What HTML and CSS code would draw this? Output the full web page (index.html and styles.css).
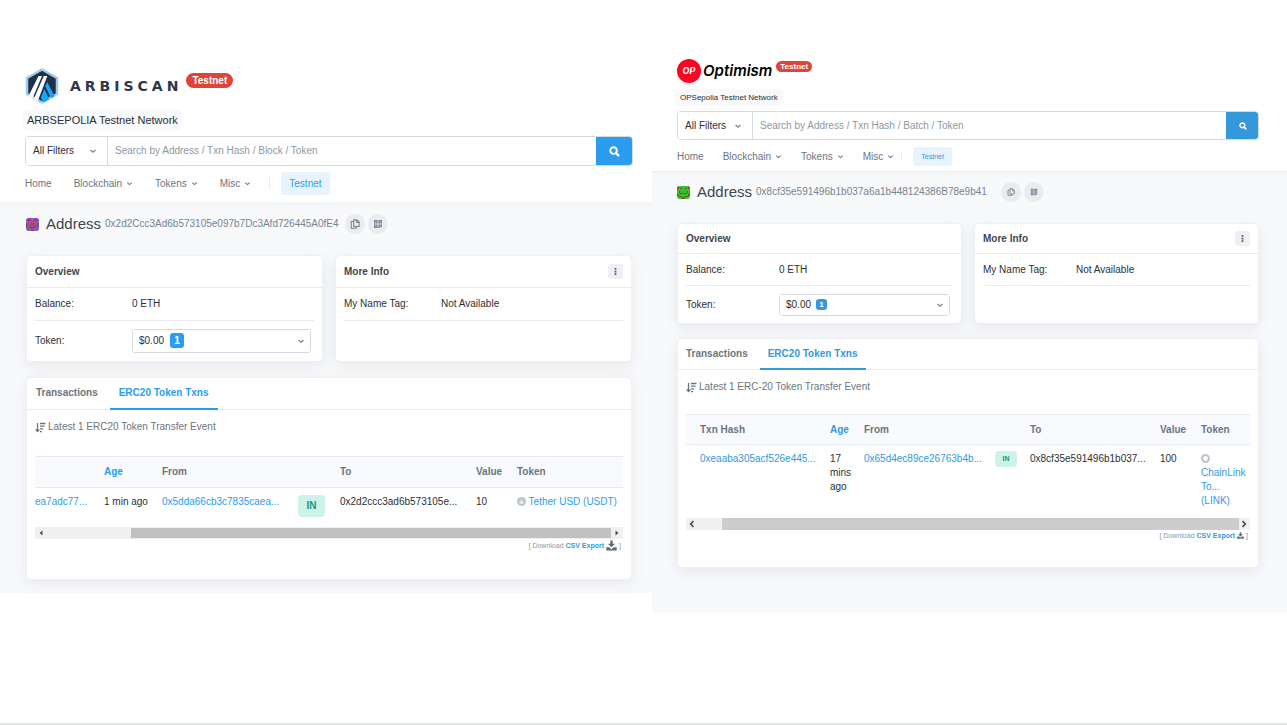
FILE: index.html
```html
<!DOCTYPE html>
<html lang="en">
<head>
    <meta charset="UTF-8">
    <meta name="viewport" content="width=device-width, initial-scale=1.0">
    <title>Testnet Explorers</title>
    <link rel="stylesheet" href="styles.css">
</head>
<body>
    <!-- shared icons -->
    <svg class="sprite" aria-hidden="true">
        <symbol id="chevron" viewBox="0 0 8 8"><path d="M1.500 3 4 5.300 6.500 3" fill="none" stroke="currentColor" stroke-width="1.200"/></symbol>
        <symbol id="search" viewBox="0 0 12 12"><circle cx="5" cy="5" r="3.600" fill="none" stroke="currentColor" stroke-width="2.100"/><path d="m7.600 7.600 3.400 3.400" stroke="currentColor" stroke-width="2.500"/></symbol>
        <symbol id="copy" viewBox="0 0 12 12"><path d="M4.500 1h3.700L11 3.600V9H4.500zM8 1v3h3M4.500 3H1.500v8h6V9" fill="none" stroke="currentColor" stroke-width="1.300" stroke-linejoin="round"/></symbol>
        <symbol id="qr" viewBox="0 0 10 10"><path fill="currentColor" fill-rule="evenodd" d="M1 1h3.600v3.600H1zM2.300 2.300v1h1v-1zM5.400 1H9v3.600H5.400zM6.700 2.300v1h1v-1zM1 5.400h3.600V9H1zM2.300 6.700v1h1v-1zM5.400 5.400H9V8H7.500v1H5.400zM6.700 6.700v1h1v-1z"/></symbol>
        <symbol id="dots" viewBox="0 0 8 10"><path fill="currentColor" d="M3 1h2v2H3zM3 4h2v2H3zM3 7h2v2H3z"/></symbol>
        <symbol id="sort" viewBox="0 0 11 11"><path d="M2.500 1v8M.6 7.300l1.900 2.200 1.900-2.200M5 1.500h5.500M5 4.200h4.500M5 6.900h3.200M5 9.600h2" fill="none" stroke="currentColor" stroke-width="1.300"/></symbol>
        <symbol id="download" viewBox="0 0 12 12"><path fill="currentColor" d="M4.700.5h2.600V4H10L6 8 2 4h2.700zM.3 7.800h3.200L6 10l2.500-2.200h3.200v3.700H.3z"/></symbol>
        <symbol id="arrow-left" viewBox="0 0 8 8"><path fill="currentColor" d="M5.500 1.500v5L2.500 4z"/></symbol>
        <symbol id="arrow-right" viewBox="0 0 8 8"><path fill="currentColor" d="M2.500 1.500v5L5.500 4z"/></symbol>
        <symbol id="angle-left" viewBox="0 0 8 8"><path d="M5.500 1.200 2.700 4l2.800 2.800" fill="none" stroke="currentColor" stroke-width="1.700"/></symbol>
        <symbol id="angle-right" viewBox="0 0 8 8"><path d="M2.500 1.200 5.300 4 2.500 6.800" fill="none" stroke="currentColor" stroke-width="1.700"/></symbol>
    </svg>

    <main class="panels">
        <section class="panel arb">
            <header class="header">
                <div class="brand">
                    <svg class="brand-icon" viewBox="0 0 34 36">
                        <path d="M17 1.500 32 10v16L17 34.500 2 26V10z" fill="#213147" stroke="#9dcced" stroke-width="2.500" stroke-linejoin="round"/>
                        <path d="M13.500 8h3.500L7.500 30.500 3.500 28z" fill="#fff"/>
                        <path d="M18.800 8h3.500L12.800 33l-4-2z" fill="#fff"/>
                        <path d="m20.300 18.500 1.900-4.500 7.300 14.300-3.300 2z" fill="#12aaff"/>
                        <path d="m19.400 21 4.800 10.500-5.800 3-2.600-4.700z" fill="#12aaff"/>
                    </svg>
                    <span class="brand-name">ARBISCAN</span>
                    <span class="brand-badge">Testnet</span>
                </div>
                <span class="network">ARBSEPOLIA Testnet Network</span>
                <form class="search">
                    <span class="select filter">
                        <select aria-label="Filter"><option>All Filters</option></select>
                        <svg class="chevron"><use href="#chevron"/></svg>
                    </span>
                    <input type="text" aria-label="Search" placeholder="Search by Address / Txn Hash / Block / Token">
                    <button type="button" aria-label="Search"><svg><use href="#search"/></svg></button>
                </form>
                <nav class="nav">
                    <a href="#">Home</a>
                    <a href="#">Blockchain <svg><use href="#chevron"/></svg></a>
                    <a href="#">Tokens <svg><use href="#chevron"/></svg></a>
                    <a href="#">Misc <svg><use href="#chevron"/></svg></a>
                    <a href="#" class="net">Testnet</a>
                </nav>
            </header>

            <div class="content">
                <div class="address">
                    <svg class="avatar" viewBox="0 0 8 8" shape-rendering="crispEdges">
                        <path fill="#a62fc0" d="M0 0h8v8H0z"/>
                        <path fill="#b0603a" d="M2 2h4v1H2zM1 3h2v1H1zM5 3h2v1H5zM3 4h2v1H3zM2 6h1v1H2zM5 6h1v1H5z"/>
                        <path fill="#38a08c" d="M0 2h1v1H0zM7 2h1v1H7zM1 5h1v1H1zM6 5h1v1H6zM0 6h1v1H0zM7 6h1v1H7zM2 7h1v1H2zM5 7h1v1H5zM3 0h2v1H3z"/>
                    </svg>
                    <h1>Address</h1>
                    <span class="hash">0x2d2Ccc3Ad6b573105e097b7Dc3Afd726445A0fE4</span>
                    <button class="round" aria-label="Copy address"><svg><use href="#copy"/></svg></button>
                    <button class="round" aria-label="QR code"><svg><use href="#qr"/></svg></button>
                </div>

                <div class="cards">
                    <div class="card">
                        <h2>Overview</h2>
                        <div class="row"><span>Balance:</span><span>0 ETH</span></div>
                        <div class="row">
                            <label for="arb-token">Token:</label>
                            <span class="select token">
                                <select id="arb-token"><option>$0.00</option></select>
                                <b class="count">1</b>
                                <svg class="chevron"><use href="#chevron"/></svg>
                            </span>
                        </div>
                    </div>
                    <div class="card">
                        <h2>More Info <button class="more" aria-label="More"><svg><use href="#dots"/></svg></button></h2>
                        <div class="row"><span>My Name Tag:</span><span>Not Available</span></div>
                    </div>
                </div>

                <div class="card txns">
                    <div class="tabs">
                        <a href="#">Transactions</a>
                        <a href="#" class="active">ERC20 Token Txns</a>
                    </div>
                    <div class="tab-body">
                        <p class="latest"><svg><use href="#sort"/></svg> Latest 1 ERC20 Token Transfer Event</p>
                        <table>
                            <thead>
                                <tr><th class="c-hash"></th><th class="c-age"><a href="#">Age</a></th><th class="c-from">From</th><th class="c-dir"></th><th class="c-to">To</th><th class="c-value">Value</th><th>Token</th></tr>
                            </thead>
                            <tbody>
                                <tr>
                                    <td><a href="#">ea7adc77...</a></td>
                                    <td>1 min ago</td>
                                    <td><a href="#">0x5dda66cb3c7835caea...</a></td>
                                    <td><span class="in">IN</span></td>
                                    <td>0x2d2ccc3ad6b573105e...</td>
                                    <td>10</td>
                                    <td><svg class="coin" viewBox="0 0 10 10"><circle cx="5" cy="5" r="5" fill="#bcc4d0"/><path d="M5 2.200 8 6.500 6.500 7.700h-3L2 6.500z" fill="#e3e7ee"/></svg> <a href="#">Tether USD (USDT)</a></td>
                                </tr>
                            </tbody>
                        </table>
                        <div class="scrollbar">
                            <svg><use href="#arrow-left"/></svg>
                            <span class="thumb"></span>
                            <svg><use href="#arrow-right"/></svg>
                        </div>
                        <p class="export">[ Download <a href="#">CSV Export</a> <svg><use href="#download"/></svg> ]</p>
                    </div>
                </div>
            </div>
        </section>

        <section class="panel op">
            <header class="header">
                <div class="brand">
                    <span class="brand-icon">OP</span>
                    <span class="brand-name">Optimism</span>
                    <span class="brand-badge">Testnet</span>
                </div>
                <span class="network">OPSepolia Testnet Network</span>
                <form class="search">
                    <span class="select filter">
                        <select aria-label="Filter"><option>All Filters</option></select>
                        <svg class="chevron"><use href="#chevron"/></svg>
                    </span>
                    <input type="text" aria-label="Search" placeholder="Search by Address / Txn Hash / Batch / Token">
                    <button type="button" aria-label="Search"><svg><use href="#search"/></svg></button>
                </form>
                <nav class="nav">
                    <a href="#">Home</a>
                    <a href="#">Blockchain <svg><use href="#chevron"/></svg></a>
                    <a href="#">Tokens <svg><use href="#chevron"/></svg></a>
                    <a href="#">Misc <svg><use href="#chevron"/></svg></a>
                    <a href="#" class="net">Testnet</a>
                </nav>
            </header>

            <div class="content">
                <div class="address">
                    <svg class="avatar" viewBox="0 0 8 8" shape-rendering="crispEdges">
                        <path fill="#2fc42f" d="M0 0h8v8H0z"/>
                        <path fill="#8d4a2b" d="M0 0h1v2H0zM7 0h1v2H7zM2 1h1v1H2zM5 1h1v1H5zM1 3h1v1H1zM6 3h1v1H6zM2 4h4v1H2zM0 5h1v1H0zM7 5h1v1H7zM1 6h2v1H1zM5 6h2v1H5zM3 7h2v1H3z"/>
                    </svg>
                    <h1>Address</h1>
                    <span class="hash">0x8cf35e591496b1b037a6a1b448124386B78e9b41</span>
                    <button class="round" aria-label="Copy address"><svg><use href="#copy"/></svg></button>
                    <button class="round" aria-label="QR code"><svg><use href="#qr"/></svg></button>
                </div>

                <div class="cards">
                    <div class="card">
                        <h2>Overview</h2>
                        <div class="row"><span>Balance:</span><span>0 ETH</span></div>
                        <div class="row">
                            <label for="op-token">Token:</label>
                            <span class="select token">
                                <select id="op-token"><option>$0.00</option></select>
                                <b class="count">1</b>
                                <svg class="chevron"><use href="#chevron"/></svg>
                            </span>
                        </div>
                    </div>
                    <div class="card">
                        <h2>More Info <button class="more" aria-label="More"><svg><use href="#dots"/></svg></button></h2>
                        <div class="row"><span>My Name Tag:</span><span>Not Available</span></div>
                    </div>
                </div>

                <div class="card txns">
                    <div class="tabs">
                        <a href="#">Transactions</a>
                        <a href="#" class="active">ERC20 Token Txns</a>
                    </div>
                    <div class="tab-body">
                        <p class="latest"><svg><use href="#sort"/></svg> Latest 1 ERC-20 Token Transfer Event</p>
                        <table>
                            <thead>
                                <tr><th class="c-hash">Txn Hash</th><th class="c-age"><a href="#">Age</a></th><th class="c-from">From</th><th class="c-dir"></th><th class="c-to">To</th><th class="c-value">Value</th><th>Token</th></tr>
                            </thead>
                            <tbody>
                                <tr>
                                    <td><a href="#">0xeaaba305acf526e445...</a></td>
                                    <td>17<br>mins<br>ago</td>
                                    <td><a href="#">0x65d4ec89ce26763b4b...</a></td>
                                    <td><span class="in">IN</span></td>
                                    <td>0x8cf35e591496b1b037...</td>
                                    <td>100</td>
                                    <td><svg class="coin" viewBox="0 0 10 10"><circle cx="5" cy="5" r="5" fill="#bcc4d0"/><path d="m5 2 2.500 1.500v3L5 8 2.500 6.500v-3z" fill="#fff"/></svg><br><a href="#">ChainLink<br>To...<br>(LINK)</a></td>
                                </tr>
                            </tbody>
                        </table>
                        <div class="scrollbar">
                            <svg><use href="#angle-left"/></svg>
                            <span class="thumb"></span>
                            <svg><use href="#angle-right"/></svg>
                        </div>
                        <p class="export">[ Download <a href="#">CSV Export</a> <svg><use href="#download"/></svg> ]</p>
                    </div>
                </div>
            </div>
        </section>
    </main>
</body>
</html>
```

FILE: styles.css
```css
* {
    box-sizing: border-box;
}

body {
    margin: 0;
    min-height: 100vh;
    border-bottom: 2px solid #dfe2e7;
    background-color: #fff;
    color: #2b2f36;
    font-family: "Liberation Sans", Arial, sans-serif;
    font-size: 10px;
    line-height: 14px;
}

h1, h2, p {
    margin: 0;
}

a {
    color: var(--blue);
    text-decoration: none;
}

button, input, select {
    font: inherit;
    color: inherit;
    border: none;
    padding: 0;
}

svg {
    flex: none;
}

.sprite {
    display: none;
}

.panels {
    display: grid;
    grid-template-columns: 652fr 635fr;
    align-items: start;
}

.arb {
    --blue: #2a9df0;
    padding-top: 68px;
}

.op {
    --blue: #3498db;
    padding-top: 58px;
}

/* header */
.header {
    display: flex;
    flex-direction: column;
    align-items: flex-start;
    padding: 0 19px 7px 25px;
}

.op .header {
    padding: 0 28px 5px 25px;
    border-bottom: 1px solid #e7eaf3;
}

.brand {
    display: flex;
    align-items: center;
    height: 36px;
    margin-bottom: 6px;
}

.op .brand {
    height: 26px;
    margin-bottom: 5px;
}

.arb .brand-icon {
    width: 34px;
    height: 36px;
    margin-right: 11px;
}

.op .brand-icon {
    width: 24px;
    height: 24px;
    margin-right: 2px;
    border-radius: 50%;
    background-color: #ff0420;
    color: #fff;
    font: italic bold 9px/24px Inter, sans-serif;
    text-align: center;
}

.arb .brand-name {
    font: bold 14px/16px "DejaVu Sans", sans-serif;
    letter-spacing: 4px;
    color: #2d3748;
}

.op .brand-name {
    font: italic 600 15px/20px Inter, sans-serif;
    color: #000;
}

.brand-badge {
    align-self: flex-start;
    margin: 5px 0 0 4px;
    padding: 0 6px;
    border-radius: 8px;
    background-color: #de4437;
    color: #fff;
    font-weight: bold;
    line-height: 15px;
}

.op .brand-badge {
    margin-top: 3px;
    padding: 0 4px;
    font-size: 8px;
    line-height: 11px;
}

.network {
    margin-left: -2px;
    margin-bottom: 6px;
    padding: 0 4px;
    border-radius: 4px;
    background-color: #f8f9fa;
    font-size: 11px;
    line-height: 20px;
}

.op .network {
    margin-bottom: 5px;
    padding: 0 5px;
    font-size: 8px;
    line-height: 17px;
}

.search {
    display: flex;
    width: 100%;
    height: 30px;
    border: 1px solid #d5dae2;
    border-radius: 4px;
    overflow: hidden;
}

.op .search {
    height: 29px;
}

.select {
    position: relative;
    display: flex;
}

.select select {
    appearance: none;
    width: 100%;
    padding: 0 7px;
    background-color: #fff;
}

.select .chevron {
    position: absolute;
    right: 10px;
    top: 50%;
    width: 8px;
    height: 8px;
    margin-top: -4px;
    color: #77838f;
    pointer-events: none;
}

.filter {
    width: 82px;
    border-right: 1px solid #d5dae2;
}

.op .filter {
    width: 75px;
}

.search input {
    flex: 1;
    min-width: 0;
    padding: 0 7px;
}

.search input::placeholder {
    color: #8c98a4;
}

.search button {
    display: flex;
    align-items: center;
    justify-content: center;
    width: 37px;
    margin: -1px -1px -1px 0;
    background-color: var(--blue);
    color: #fff;
}

.search button svg {
    width: 11px;
    height: 11px;
}

.op .search button {
    width: 33px;
}

.op .search button svg {
    width: 8px;
    height: 8px;
}

.nav {
    display: flex;
    align-items: center;
    gap: 22px;
    height: 23px;
    margin-top: 6px;
}

.op .nav {
    gap: 19px;
    height: 19px;
    margin-top: 7px;
}

.nav a {
    display: flex;
    align-items: center;
    gap: 4px;
    color: #6c757e;
}

.nav a svg {
    width: 7px;
    height: 7px;
}

.nav .net {
    padding: 0 8px;
    border-radius: 3px;
    background-color: #e8f4fd;
    color: var(--blue);
    line-height: 23px;
    margin-left: 8px;
    position: relative;
}

.nav .net::before {
    content: "";
    position: absolute;
    left: -12px;
    top: 5px;
    bottom: 5px;
    border-left: 1px solid #e7eaf3;
}

.op .nav .net {
    margin-left: 0;
    font-size: 7px;
    line-height: 19px;
}

/* page body */
.content {
    padding: 11px 20px 13px 26px;
    background: linear-gradient(#f3f5f7, #f8f9fb 8px);
}

.op .content {
    padding: 9px 28px 45px 25px;
}

.address {
    display: flex;
    align-items: center;
    height: 22px;
    margin-bottom: 20px;
}

.avatar {
    width: 13px;
    height: 13px;
    margin-right: 7px;
    border-radius: 3px;
}

h1 {
    margin-right: 4px;
    font-size: 15px;
    font-weight: normal;
    line-height: 18px;
    color: #3f454d;
}

.hash {
    margin-right: 6px;
    color: #77838f;
}

.op .hash {
    margin-right: 14px;
}

.round {
    display: flex;
    align-items: center;
    justify-content: center;
    width: 20px;
    height: 20px;
    margin-right: 3px;
    border-radius: 50%;
    background-color: #eaebee;
    color: #77838f;
}

.round svg {
    width: 10px;
    height: 10px;
}

.op .round svg {
    width: 8px;
    height: 8px;
}

.cards {
    display: grid;
    grid-template-columns: 1fr 1fr;
    gap: 12px;
    margin-bottom: 15px;
}

.op .cards {
    margin-bottom: 14px;
}

.card {
    border: 1px solid #eef0f5;
    border-radius: 5px;
    background-color: #fff;
    box-shadow: 0 4px 14px rgba(140, 152, 164, 0.16);
}

.cards .card {
    min-height: 107px;
}

.op .cards .card {
    min-height: 101px;
}

h2 {
    display: flex;
    align-items: center;
    justify-content: space-between;
    height: 32px;
    padding: 0 8px;
    border-bottom: 1px solid #e7eaf3;
    font-size: 10px;
    color: #3f454d;
}

.op h2 {
    height: 30px;
}

.more {
    display: flex;
    align-items: center;
    justify-content: center;
    width: 15px;
    height: 15px;
    border-radius: 3px;
    background-color: #eff0f3;
    color: #4a5d75;
}

.more svg {
    width: 7px;
    height: 9px;
}

.row {
    display: grid;
    grid-template-columns: 97px 1fr;
    align-items: center;
    height: 33px;
    margin: 0 8px;
    border-bottom: 1px solid #e7eaf3;
}

.op .row {
    grid-template-columns: 93px 1fr;
    height: 32px;
}

.row + .row {
    height: 40px;
    border-bottom: none;
}

.op .row + .row {
    height: 37px;
}

.token {
    height: 24px;
    margin-right: 3px;
    border: 1px solid #d5dae2;
    border-radius: 3px;
}

.op .token {
    height: 22px;
}

.token .chevron {
    right: 5px;
}

.token select {
    padding: 0 6px;
}

.count {
    position: absolute;
    left: 37px;
    top: 3px;
    width: 14px;
    border-radius: 3px;
    background-color: var(--blue);
    color: #fff;
    line-height: 15px;
    text-align: center;
}

.op .count {
    left: 36px;
    top: 4px;
    width: 11px;
    font-size: 8px;
    line-height: 11px;
}

/* transactions */
.tabs {
    display: flex;
    gap: 12px;
    height: 32px;
    padding-left: 9px;
    border-bottom: 1px solid #e7eaf3;
}

.op .tabs {
    height: 31px;
    padding-left: 8px;
}

.tabs a {
    margin-bottom: -1px;
    line-height: 30px;
    font-weight: bold;
    color: #6c757e;
}

.tabs .active {
    padding: 0 9px;
    border-bottom: 2px solid var(--blue);
    color: var(--blue);
}

.op .tabs .active {
    padding: 0 8px;
}

.tab-body {
    padding: 10px 8px 26px;
}

.op .tab-body {
    padding-bottom: 25px;
}

.latest {
    display: flex;
    align-items: center;
    gap: 2px;
    margin-bottom: 22px;
    color: #6c757e;
}

.latest svg {
    width: 11px;
    height: 11px;
}

.op .latest {
    margin-bottom: 20px;
}

table {
    width: 100%;
    table-layout: fixed;
    border-collapse: collapse;
    white-space: nowrap;
}

th {
    height: 31px;
    padding: 0;
    border-top: 1px solid #e7eaf3;
    border-bottom: 1px solid #e7eaf3;
    background-color: #f8fafd;
    text-align: left;
    color: #6c757e;
}

td {
    height: 39px;
    padding: 7px 0 0;
    vertical-align: top;
}

.op th {
    height: 30px;
}

.op td {
    height: 73px;
}

.op th:first-child,
.op td:first-child {
    padding-left: 14px;
}

.c-hash { width: 69px; }
.c-age { width: 58px; }
.c-from { width: 136px; }
.c-dir { width: 42px; }
.c-to { width: 136px; }
.c-value { width: 41px; }

.op .c-hash { width: 144px; }
.op .c-age { width: 34px; }
.op .c-from { width: 131px; }
.op .c-dir { width: 35px; }
.op .c-to { width: 130px; }

.in {
    display: block;
    width: 27px;
    border-radius: 4px;
    background-color: #ccf3ea;
    color: #1a9480;
    font-weight: bold;
    line-height: 22px;
    text-align: center;
}

.op .in {
    width: 22px;
    margin-top: -1px;
    font-size: 7px;
    line-height: 16px;
}

.coin {
    width: 9px;
    height: 9px;
    vertical-align: -1px;
}

.scrollbar {
    display: flex;
    align-items: center;
    justify-content: space-between;
    height: 12px;
    padding: 0 2px;
    background-color: #f0f0f0;
    color: #505050;
}

.scrollbar svg {
    width: 8px;
    height: 8px;
}

.thumb {
    flex: 1;
    height: 10px;
    margin: 0 2px 0 86px;
    background-color: #c1c1c1;
}

.op .thumb {
    height: 12px;
    margin: 0 1px 0 26px;
    background-color: #cdcdcd;
}

.export {
    display: flex;
    align-items: center;
    justify-content: flex-end;
    gap: 2px;
    padding-right: 2px;
    color: #8c98a4;
    font-size: 7px;
}

.export a {
    font-weight: bold;
}

.export svg {
    width: 11px;
    height: 11px;
    color: #5f6b7c;
}

.op .export {
    line-height: 12px;
}

.op .export svg {
    width: 7px;
    height: 7px;
}
```
